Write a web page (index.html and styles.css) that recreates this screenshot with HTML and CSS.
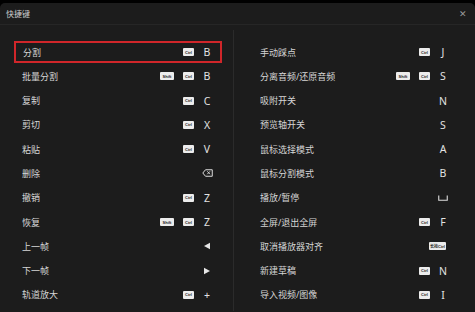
FILE: index.html
```html
<!DOCTYPE html>
<html lang="zh-CN">
  <head>
    <meta charset="UTF-8" />
    <title>快捷键</title>
    <link rel="stylesheet" href="styles.css">
  </head>
  <body>
    <div class="dialog">
      <div class="head">
        <span class="title">快捷键</span>
        <span class="close">✕</span>
      </div>
      <div class="cols">
        <div class="col left">
          <div class="row active"><span class="name">分割</span><span class="badge">Ctrl</span><span class="key">B</span></div>
          <div class="row"><span class="name">批量分割</span><span class="badge shift">Shift</span><span class="badge">Ctrl</span><span class="key">B</span></div>
          <div class="row"><span class="name">复制</span><span class="badge">Ctrl</span><span class="key">C</span></div>
          <div class="row"><span class="name">剪切</span><span class="badge">Ctrl</span><span class="key">X</span></div>
          <div class="row"><span class="name">粘贴</span><span class="badge">Ctrl</span><span class="key">V</span></div>
          <div class="row"><span class="name">删除</span>
            <span class="key">
              <svg width="11" height="8" viewBox="0 0 11 8"><path d="M3.5 0.75 H10.25 V7.25 H3.5 L0.8 4 Z" fill="none" stroke="#ddd" stroke-width="1"/><path d="M5.3 2.3 L8 5.2 M8 2.3 L5.3 5.2" stroke="#ddd" stroke-width="0.9"/></svg>
            </span>
          </div>
          <div class="row"><span class="name">撤销</span><span class="badge">Ctrl</span><span class="key">Z</span></div>
          <div class="row"><span class="name">恢复</span><span class="badge shift">Shift</span><span class="badge">Ctrl</span><span class="key">Z</span></div>
          <div class="row"><span class="name">上一帧</span>
            <span class="key"><svg width="8" height="8" viewBox="0 0 8 8"><path d="M7 0.8 V7.2 L1 4 Z" fill="#e6e6e6"/></svg></span>
          </div>
          <div class="row"><span class="name">下一帧</span>
            <span class="key"><svg width="8" height="8" viewBox="0 0 8 8"><path d="M1 0.8 V7.2 L7 4 Z" fill="#e6e6e6"/></svg></span>
          </div>
          <div class="row"><span class="name">轨道放大</span><span class="badge">Ctrl</span><span class="key">+</span></div>
        </div>
        <div class="col right">
          <div class="row"><span class="name">手动踩点</span><span class="badge">Ctrl</span><span class="key">J</span></div>
          <div class="row"><span class="name">分离音频/还原音频</span><span class="badge shift">Shift</span><span class="badge">Ctrl</span><span class="key">S</span></div>
          <div class="row"><span class="name">吸附开关</span><span class="key">N</span></div>
          <div class="row"><span class="name">预览轴开关</span><span class="key">S</span></div>
          <div class="row"><span class="name">鼠标选择模式</span><span class="key">A</span></div>
          <div class="row"><span class="name">鼠标分割模式</span><span class="key">B</span></div>
          <div class="row"><span class="name">播放/暂停</span>
            <span class="key"><svg width="10" height="6" viewBox="0 0 10 6"><path d="M0.75 0.5 V5.25 H9.25 V0.5" fill="none" stroke="#ddd" stroke-width="1.1"/></svg></span>
          </div>
          <div class="row"><span class="name">全屏/退出全屏</span><span class="badge">Ctrl</span><span class="key">F</span></div>
          <div class="row"><span class="name">取消播放器对齐</span><span class="badge wide">长按Ctrl</span></div>
          <div class="row"><span class="name">新建草稿</span><span class="badge">Ctrl</span><span class="key">N</span></div>
          <div class="row"><span class="name">导入视频/图像</span><span class="badge">Ctrl</span><span class="key">I</span></div>
        </div>
      </div>
    </div>
  </body>
</html>
```

FILE: styles.css
```css
* {
    margin: 0;
    padding: 0;
    box-sizing: border-box;
}

body {
    background: #000;
    width: 475px;
    height: 312px;
    overflow: hidden;
    font-family: "Noto Sans", "Noto Sans CJK SC", sans-serif;
}

.dialog {
    margin-top: 3px;
    height: 309px;
    background: #1c1c1c;
    border-radius: 5px 5px 0 0;
}

.head {
    height: 22px;
    display: flex;
    align-items: center;
    justify-content: space-between;
    padding: 0 8px 0 6px;
    border-bottom: 1px solid #262626;
}

.title {
    font-size: 8px;
    color: #cfcfcf;
}

.close {
    font-size: 9px;
    color: #9a9a9a;
}

.cols {
    display: grid;
    grid-template-columns: 233px 1fr;
    margin-top: 5px;
}

.col {
    display: flex;
    flex-direction: column;
    gap: 2.3px;
    padding-top: 11px;
    height: 281px;
}

.left {
    padding-left: 14px;
    padding-right: 11px;
}

.right {
    border-left: 1px solid #2b2b2b;
    padding-left: 18px;
    padding-right: 17px;
}

.row {
    display: flex;
    align-items: center;
    height: 22px;
    padding: 0 7px 0 6px;
    border: 2px solid transparent;
}

.row.active {
    border-color: #d0262a;
    padding-left: 7px;
}

.name {
    flex: 1;
    font-size: 9px;
    color: #d6d6d6;
}

.badge {
    display: flex;
    align-items: center;
    justify-content: center;
    height: 8px;
    min-width: 11px;
    padding: 0 1px;
    margin-right: 7px;
    background: #ececec;
    border-radius: 1px;
    color: #222;
    font-family: "Liberation Sans", sans-serif;
    font-size: 4px;
    font-weight: bold;
}

.badge.shift {
    min-width: 14px;
    margin-right: 9px;
}

.badge.wide {
    min-width: 17px;
    margin-right: 3px;
}

.key {
    width: 12px;
    display: flex;
    align-items: center;
    justify-content: center;
    font-size: 10.5px;
    color: #e2e2e2;
}
```
